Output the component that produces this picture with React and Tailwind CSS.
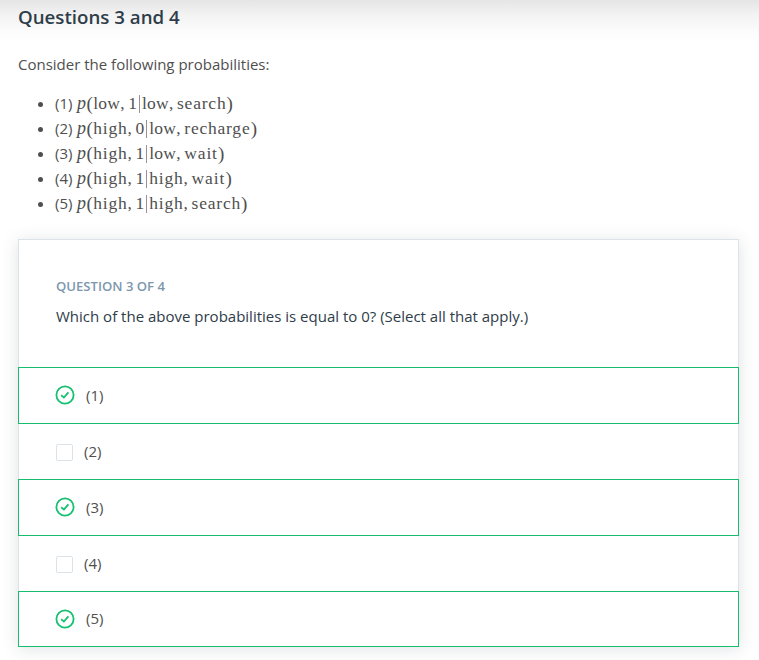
const words = {
  low: 'w-[27px] tracking-[0.2px]',
  high: 'w-[34.3px] tracking-[0.8px]',
  search: 'w-[49.5px] tracking-[0.8px]',
  recharge: 'w-[66.4px] tracking-[0.78px]',
  wait: 'w-[33.8px] tracking-[0.85px]',
};

function Word({ children }) {
  return <span className={`shrink-0 ${words[children]}`}>{children}</span>;
}

function Formula({ next, reward, state, action }) {
  return (
    <span className="flex text-[17.5px] leading-[25px] whitespace-nowrap font-['Liberation_Serif',serif]">
      <span className="w-[9.5px] text-[18px] italic">p</span>
      <span className="w-[6.8px] text-[19px]">(</span>
      <Word>{next}</Word>
      <span className="w-[8px]">,</span>
      <span className="w-[9.1px]">{reward}</span>
      <span className="w-[4px] flex justify-center">
        <span className="mt-[4px] h-[18px] w-px bg-[#9c9098]" />
      </span>
      <span className="w-[0.6px]" />
      <Word>{state}</Word>
      <span className="w-[8px]">,</span>
      <Word>{action}</Word>
      <span className="text-[19px]">)</span>
    </span>
  );
}

const formulas = [
  { next: 'low', reward: '1', state: 'low', action: 'search' },
  { next: 'high', reward: '0', state: 'low', action: 'recharge' },
  { next: 'high', reward: '1', state: 'low', action: 'wait' },
  { next: 'high', reward: '1', state: 'high', action: 'wait' },
  { next: 'high', reward: '1', state: 'high', action: 'search' },
];

const answers = [
  { label: '(1)', correct: true },
  { label: '(2)', correct: false },
  { label: '(3)', correct: true },
  { label: '(4)', correct: false },
  { label: '(5)', correct: true },
];

function CheckCircle() {
  return (
    <svg className="-ml-px mr-[11px] size-5" viewBox="0 0 20 20" fill="none" stroke="#17c070" strokeWidth="1.8">
      <circle cx="10" cy="10" r="8.6" />
      <path d="M6.2 10.3 8.9 12.6 13.4 7.4" />
    </svg>
  );
}

function Answer({ label, correct }) {
  return correct ? (
    <li className="-mx-px -mb-px flex h-[57px] items-start border border-[#15bd6c] pt-[17px] pl-[37px] leading-5 last:mb-[-1px] last:h-14 last:leading-[18px]">
      <CheckCircle />
      <span>{label}</span>
    </li>
  ) : (
    <li className="flex h-14 items-center pl-[37px]">
      <span className="mt-0.5 mr-[11px] size-[17px] rounded-[2px] border border-[#dbe2e8]" />
      <span>{label}</span>
    </li>
  );
}

export default function App() {
  return (
    <main className="h-[660px] overflow-hidden bg-white bg-[linear-gradient(#e5e5e5,#f2f2f2_14px,#fcfcfc_32px,#fff_42px)] px-[18px] text-[15px] text-[#4f4f4f] font-['Open_Sans',sans-serif]">
      <h1 className="pt-[5px] text-[18.7px] leading-6 font-semibold text-[#2e3d49]">Questions 3 and 4</h1>
      <p className="mt-[23px] leading-[25px]">Consider the following probabilities:</p>
      <ul className="mt-[14px]">
        {formulas.map((f, i) => (
          <li key={i} className="flex h-[25px] items-center pl-5">
            <span className="mt-[2px] mr-3 size-[5px] rounded-full bg-[#4f4f4f]" />
            <span className="mr-[3px] w-[19px] whitespace-nowrap">({i + 1})</span>
            <Formula {...f} />
          </li>
        ))}
      </ul>
      <section className="mt-[23px] w-[721px] border border-[#dbe2e8] bg-white text-[15px] shadow-[0_2px_16px_rgba(46,61,73,0.15)]">
        <header className="h-[127px] pt-[36px] pl-[37px]">
          <h2 className="text-[13.1px] leading-5 font-semibold text-[#7d97ad]">QUESTION 3 OF 4</h2>
          <p className="mt-[8px] leading-6 text-[#2e3d49]">Which of the above probabilities is equal to 0? (Select all that apply.)</p>
        </header>
        <ul>
          {answers.map((a) => (
            <Answer key={a.label} {...a} />
          ))}
        </ul>
      </section>
    </main>
  );
}
